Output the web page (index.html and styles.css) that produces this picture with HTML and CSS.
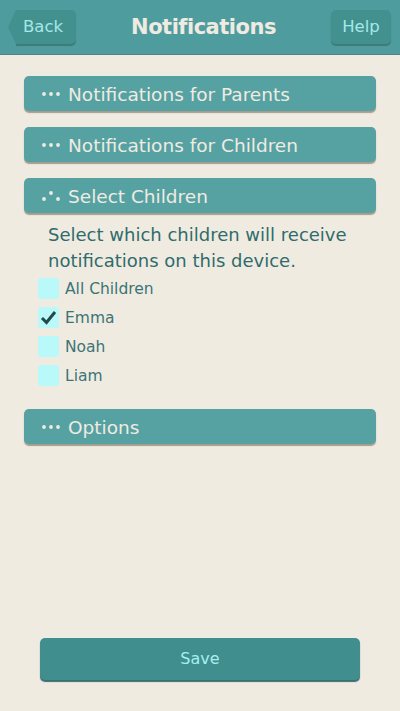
FILE: index.html
```html
<!DOCTYPE html>
<html>
<head>
<meta charset="utf-8"/>
<title>Notifications</title>
<link rel="stylesheet" href="styles.css">
</head>
<body>
<div class="app">
  <div class="topbar">
    <a class="btn back">Back</a>
    <h1>Notifications</h1>
    <a class="btn help">Help</a>
  </div>

  <div class="content">
    <div class="section">
      <svg class="dots" width="20" height="8" viewBox="0 0 20 8"><circle cx="3" cy="4" r="1.9"/><circle cx="10" cy="4" r="1.9"/><circle cx="17" cy="4" r="1.9"/></svg>
      Notifications for Parents
    </div>
    <div class="section">
      <svg class="dots" width="20" height="8" viewBox="0 0 20 8"><circle cx="3" cy="4" r="1.9"/><circle cx="10" cy="4" r="1.9"/><circle cx="17" cy="4" r="1.9"/></svg>
      Notifications for Children
    </div>
    <div class="section open">
      <svg class="dots" width="20" height="12" viewBox="0 0 20 12"><circle cx="3" cy="9" r="1.9"/><circle cx="10" cy="3" r="1.9"/><circle cx="17" cy="9" r="1.9"/></svg>
      Select Children
    </div>
    <div class="panel">
      <p class="hint">Select which children will receive notifications on this device.</p>
      <label class="check"><span class="box"></span>All Children</label>
      <label class="check"><span class="box"><svg width="21" height="21" viewBox="0 0 21 21"><path d="M4 11 L8.5 15.5 L17 5" fill="none" stroke="#23494a" stroke-width="3" stroke-linejoin="miter"/></svg></span>Emma</label>
      <label class="check"><span class="box"></span>Noah</label>
      <label class="check"><span class="box"></span>Liam</label>
    </div>
    <div class="section">
      <svg class="dots" width="20" height="8" viewBox="0 0 20 8"><circle cx="3" cy="4" r="1.9"/><circle cx="10" cy="4" r="1.9"/><circle cx="17" cy="4" r="1.9"/></svg>
      Options
    </div>
  </div>

  <div class="footer">
    <a class="save">Save</a>
  </div>
</div>
</body>
</html>
```

FILE: styles.css
```css
body {
  margin: 0;
  background-color: #f0ebe1;
  font-family: "DejaVu Sans", sans-serif;
}

.app {
  height: 711px;
  display: flex;
  flex-direction: column;
}

.topbar {
  height: 55px;
  background-color: #4f9c9f;
  border-bottom: 1px solid #45898c;
  display: flex;
  align-items: center;
  justify-content: space-between;
  padding: 0 9px 0 8px;
  box-sizing: border-box;
}

.topbar h1 {
  margin: 0;
  font-size: 21px;
  color: #f0ebe1;
  font-weight: bold;
  letter-spacing: -0.5px;
}

.btn {
  height: 34px;
  line-height: 34px;
  background-color: #43918f;
  color: #a4e8e7;
  font-size: 16.5px;
  border-radius: 5px;
  box-shadow: 0 2px 1px rgba(40, 80, 80, 0.45);
  padding: 0 10px;
}

.back {
  position: relative;
  margin-left: 8px;
  padding-left: 7px;
  width: 60px;
  box-sizing: border-box;
  border-radius: 0 5px 5px 0;
}

.back:before {
  content: "";
  position: absolute;
  left: -8px;
  top: 0;
  width: 0;
  height: 0;
  border-top: 17px solid transparent;
  border-bottom: 17px solid transparent;
  border-right: 8px solid #43918f;
}

.help {
  width: 60px;
  box-sizing: border-box;
  text-align: center;
}

.content {
  flex: 1;
  padding: 21px 24px 0 24px;
}

.section {
  height: 35px;
  background-color: #56a2a3;
  border-radius: 5px;
  box-shadow: 0 2px 1px #a39d8f;
  color: #f0ebe1;
  font-size: 18.5px;
  display: flex;
  align-items: center;
  margin-bottom: 16px;
  padding-left: 17px;
  padding-top: 1px;
  box-sizing: border-box;
}

.dots {
  fill: #f0ebe1;
  margin-right: 7px;
}

.section.open {
  margin-bottom: 9px;
}

.panel {
  padding: 0 0 19px 14px;
}

.hint {
  margin: 0 0 0 10px;
  color: #2f6b6c;
  font-size: 18px;
  line-height: 26px;
}

.check {
  display: flex;
  align-items: center;
  height: 29px;
  color: #3b7576;
  font-size: 15.5px;
}

.box {
  width: 21px;
  height: 21px;
  background-color: #b9f9f9;
  border-radius: 3px;
  margin-right: 6px;
}

.box svg {
  display: block;
}

.footer {
  padding: 0 40px 31px 40px;
}

.save {
  display: block;
  height: 42px;
  line-height: 42px;
  background-color: #418e8e;
  color: #a8eeee;
  text-align: center;
  font-size: 16px;
  border-radius: 5px;
  box-shadow: 0 2px 1px #3a6f6e;
}
```
